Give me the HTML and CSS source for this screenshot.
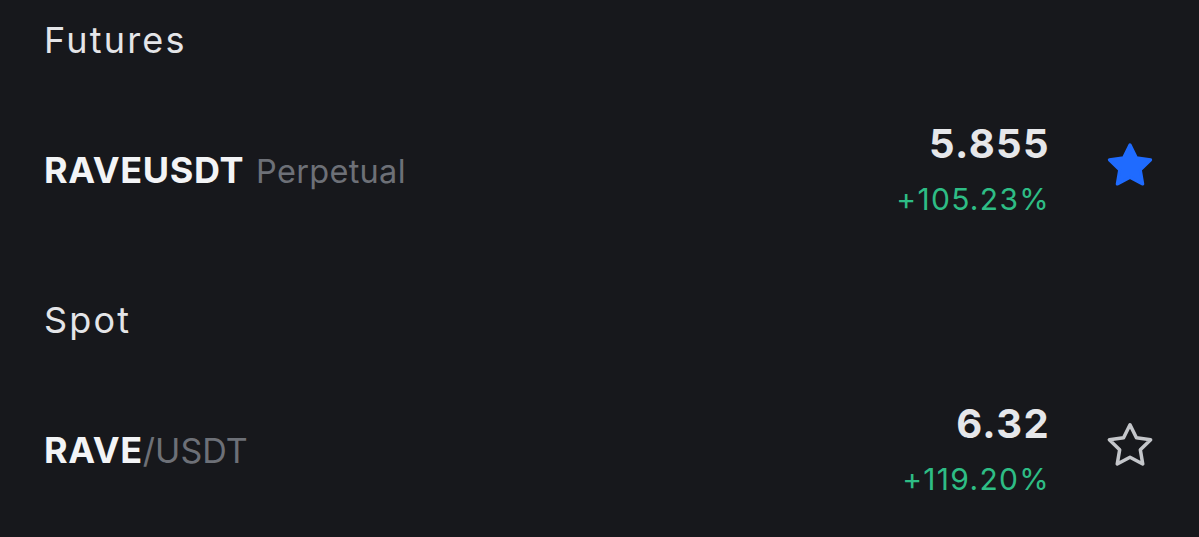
FILE: index.html
```html
<!DOCTYPE html>
<html lang="en">
<head>
<meta charset="utf-8">
<title>Search results</title>
<link rel="stylesheet" href="styles.css">
</head>
<body>
<main class="page">
  <section class="section">
    <h2 class="section-title">Futures</h2>
    <div class="row">
      <div class="symbol"><span class="base">RAVEUSDT</span><span class="tag">Perpetual</span></div>
      <div class="quote">
        <div class="price">5.855</div>
        <div class="change">+105.23%</div>
      </div>
      <button class="fav" aria-label="Favorite">
        <svg viewBox="0 0 24 24" width="56" height="56"><path d="M12 2.9l2.75 5.55 6.1.9-4.42 4.3 1.04 6.08L12 16.85l-5.47 2.88 1.04-6.08-4.42-4.3 6.1-.9z" fill="#1f6bff" stroke="#1f6bff" stroke-width="1.3" stroke-linejoin="round"/></svg>
      </button>
    </div>
  </section>
  <section class="section">
    <h2 class="section-title">Spot</h2>
    <div class="row">
      <div class="symbol"><span class="base">RAVE</span><span class="pair">/USDT</span></div>
      <div class="quote">
        <div class="price">6.32</div>
        <div class="change">+119.20%</div>
      </div>
      <button class="fav" aria-label="Favorite">
        <svg viewBox="0 0 24 24" width="56" height="56"><path d="M12 2.9l2.75 5.55 6.1.9-4.42 4.3 1.04 6.08L12 16.85l-5.47 2.88 1.04-6.08-4.42-4.3 6.1-.9z" fill="none" stroke="#c4c6ca" stroke-width="1.5" stroke-linejoin="round"/></svg>
      </button>
    </div>
  </section>
</main>
</body>
</html>
```
FILE: styles.css
```css
html, body {
  margin: 0;
  padding: 0;
  background: #17181c;
}
body {
  font-family: Inter, "Noto Sans", "Liberation Sans", sans-serif;
  color: #eaecef;
  width: 1199px;
  height: 537px;
  overflow: hidden;
}
.page {
  padding: 0 41px 0 44px;
}
.section {
  padding-bottom: 20px;
}
.section-title {
  margin: 0;
  height: 80px;
  display: flex;
  align-items: center;
  font-size: 36px;
  font-weight: 400;
  letter-spacing: 2.2px;
  color: #e4e5e8;
}
.row {
  height: 180px;
  display: flex;
  align-items: center;
}
.symbol {
  flex: 1;
  font-size: 36px;
  display: flex;
  align-items: baseline;
}
.base {
  font-weight: 700;
  color: #f3f4f6;
  letter-spacing: 0.6px;
}
.tag {
  margin-left: 12px;
  font-size: 32.5px;
  color: #6d7077;
  letter-spacing: 0.3px;
}
.pair {
  color: #6d7077;
  font-size: 34px;
  letter-spacing: 0;
}
.quote {
  display: flex;
  flex-direction: column;
  align-items: flex-end;
  gap: 14px;
  margin-top: -4px;
  margin-right: -3px;
}
.price {
  font-size: 40px;
  font-weight: 700;
  line-height: 48px;
  letter-spacing: 1.4px;
  color: #e6e7ea;
}
.change {
  font-size: 30px;
  line-height: 34px;
  color: #2ebd85;
  letter-spacing: 1.3px;
}
.fav {
  margin-left: 55px;
  margin-bottom: 8px;
  width: 56px;
  height: 56px;
  padding: 0;
  border: 0;
  background: none;
  display: flex;
  align-items: center;
  justify-content: center;
}
```
